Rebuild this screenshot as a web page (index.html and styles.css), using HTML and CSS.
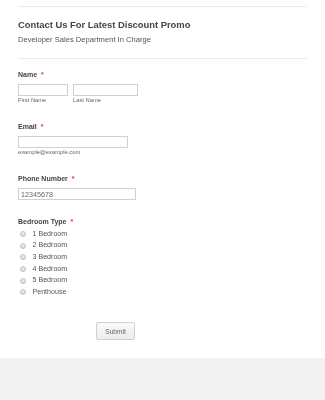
FILE: index.html
```html
<!DOCTYPE html>
<html lang="en">
<head>
  <meta charset="UTF-8">
  <title>Contact Us For Latest Discount Promo</title>
  <link rel="stylesheet" href="styles.css">
</head>
<body>

<form class="form-wrap">
  <div class="header">
    <h1>Contact Us For Latest Discount Promo</h1>
    <p>Developer Sales Department In Charge</p>
  </div>

  <div class="field">
    <label class="label">Name <span class="req">*</span></label>
    <div class="row">
      <div class="sub">
        <input type="text" class="input first">
        <span class="sublabel">First Name</span>
      </div>
      <div class="sub">
        <input type="text" class="input last">
        <span class="sublabel">Last Name</span>
      </div>
    </div>
  </div>

  <div class="field">
    <label class="label">Email <span class="req">*</span></label>
    <div class="sub">
      <input type="text" class="input email">
      <span class="sublabel">example@example.com</span>
    </div>
  </div>

  <div class="field field-phone">
    <label class="label">Phone Number <span class="req">*</span></label>
    <input type="text" class="input phone" value="12345678">
  </div>

  <div class="field">
    <label class="label">Bedroom Type <span class="req">*</span></label>
    <div class="options">
      <label class="option"><span class="radio"></span>1 Bedroom</label>
      <label class="option"><span class="radio"></span>2 Bedroom</label>
      <label class="option"><span class="radio"></span>3 Bedroom</label>
      <label class="option"><span class="radio"></span>4 Bedroom</label>
      <label class="option"><span class="radio"></span>5 Bedroom</label>
      <label class="option"><span class="radio"></span>Penthouse</label>
    </div>
  </div>

  <div class="buttons">
    <button type="button" class="submit">Submit</button>
  </div>
</form>

</body>
</html>
```

FILE: styles.css
```css
body {
  margin: 0;
  padding: 0;
  background-color: #f2f2f2;
  font-family: "Liberation Sans", Arial, sans-serif;
  color: #555;
}
.form-wrap {
  display: block;
  background: white;
  padding: 6px 18px 18px;
  will-change: transform;
}
.header {
  border-top: 1px solid #ececec;
  border-bottom: 1px solid #ececec;
  padding: 12px 0 13px;
}
.header h1 {
  margin: 0;
  font-size: 9.4px;
  line-height: 12px;
  font-weight: bold;
  color: #444;
}
.header p {
  margin: 4px 0 0;
  font-size: 7.6px;
  line-height: 10px;
  color: #555;
}
.field {
  margin-bottom: 18px;
}
.header + .field {
  margin-top: 11px;
}
.field-phone {
  margin-bottom: 17px;
}
.label {
  display: block;
  font-size: 7px;
  line-height: 10px;
  font-weight: bold;
  color: #444;
  margin-bottom: 4px;
}
.req {
  color: #e03b3b;
  margin-left: 2px;
}
.row {
  display: flex;
  gap: 5px;
}
.sub {
  display: flex;
  flex-direction: column;
}
.input {
  box-sizing: border-box;
  height: 12px;
  margin: 0;
  padding: 0 2px;
  border: 1px solid #d0d0d0;
  border-radius: 0;
  background: white;
  font-family: "Liberation Sans", Arial, sans-serif;
  font-size: 7.2px;
  color: #666;
  outline: none;
}
.first { width: 50px; }
.last { width: 65px; }
.email { width: 110px; }
.phone { width: 118px; display: block; }
.sublabel {
  margin-top: 1px;
  font-size: 5.8px;
  line-height: 7px;
  color: #666;
}
.label + .options {
  margin-top: -3px;
}
.option {
  display: flex;
  align-items: center;
  height: 11.6px;
  font-size: 7.1px;
  color: #555;
}
.radio {
  box-sizing: border-box;
  width: 6px;
  height: 6px;
  margin: 1px 6.5px 0 2px;
  border: 1px solid #c0c0c0;
  border-radius: 50%;
  background: linear-gradient(#eee, #d6d6d6);
}
.buttons {
  padding-top: 4px;
  padding-left: 78px;
}
.submit {
  box-sizing: border-box;
  width: 39px;
  height: 18px;
  padding: 0;
  border: 1px solid #d0d0d0;
  border-radius: 2px;
  background: linear-gradient(#fafafa, #ececec);
  font-family: "Liberation Sans", Arial, sans-serif;
  font-size: 6.6px;
  color: #666;
}
```
